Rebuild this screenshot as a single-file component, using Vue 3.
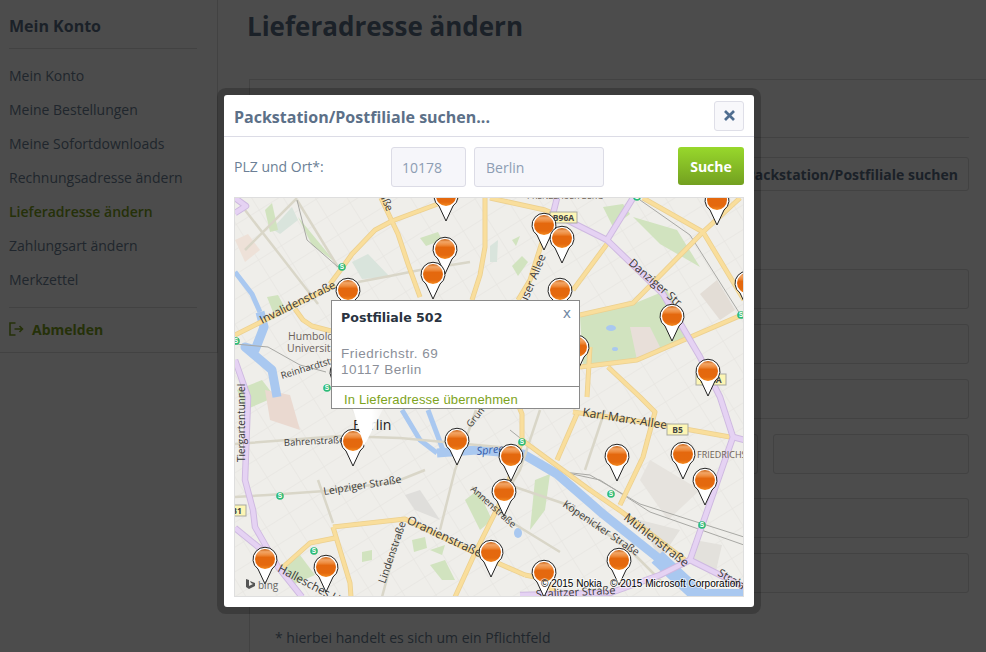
<script setup>
const navItems = [
  { label: 'Mein Konto' },
  { label: 'Meine Bestellungen' },
  { label: 'Meine Sofortdownloads' },
  { label: 'Rechnungsadresse ändern' },
  { label: 'Lieferadresse ändern', active: true },
  { label: 'Zahlungsart ändern' },
  { label: 'Merkzettel' }
]

const yellowRoads = [
  '235,335 265,320 335,285',
  '295,309 303,320 312,326 331,331',
  '330,284 342,268 352,254 375,230 392,221 435,205 458,197',
  '381,198 398,234 408,264 420,297',
  '485,198 485,247 480,275 472,300',
  '490,198 545,210 575,222',
  '550,217 530,280 518,300',
  '607,244 573,290',
  '580,315 633,303 703,232 740,198',
  '643,198 703,232 744,300',
  '580,367 637,360 744,314',
  '590,347 587,397',
  '608,367 640,397 655,412 643,457 620,505',
  '573,412 657,424 730,437',
  '515,397 522,414 522,440 590,490 622,512 685,560',
  '577,414 557,460',
  '333,527 405,519 475,553 525,575',
  '455,597 475,553 505,493 522,440',
  '333,527 350,583 351,597',
  '335,538 310,543 283,567',
  '560,597 540,578 525,575'
]

const purpleRoads = [
  '557,198 553,214 567,220 607,240 663,294 700,357 720,397 733,437 690,560',
  '633,198 607,240',
  '520,595 610,593 660,575 690,560 744,587',
  '733,437 744,440',
  '235,360 248,397 245,480 253,510 255,527 278,567 302,597',
  '235,528 262,550',
  '235,213 246,206 235,198'
]

const beigeRoads = [
  '245,210 318,304',
  '297,198 245,250',
  '297,200 338,267',
  '358,282 390,276 420,270 470,262',
  '235,444 340,436 400,438 510,448',
  '235,497 268,495 325,491 395,482 425,470',
  '318,480 333,523',
  '472,487 508,520 560,552',
  '400,530 382,597',
  '515,487 565,504 630,550 662,582',
  '476,410 455,470 440,530',
  '605,410 585,470',
  '540,410 520,470 502,500'
]

const rails = [
  '297,200 307,240 338,267',
  '640,200 690,235 740,314',
  '510,430 563,472 590,475 640,504 744,537',
  '563,472 600,480 650,512 744,545',
  '235,344 268,347 300,365 326,372'
]

const parks = [
  { points: '580,317 633,304 667,290 690,337 637,360 583,364', fill: '#d1e3bf' },
  { points: '630,327 650,327 660,347 637,360', fill: '#e8dfd9' },
  { points: '700,294 717,280 735,310 720,320', fill: '#e3ddd6' },
  { points: '603,207 623,204 630,214 613,227', fill: '#d1e3bf' },
  { points: '633,217 677,230 700,267 660,244', fill: '#d1e3bf' },
  { points: '298,217 335,262 312,245', fill: '#d1e3bf' },
  { points: '272,229 292,207 298,220 280,234', fill: '#d9e4dc' },
  { points: '352,262 368,254 390,277 362,279', fill: '#d9e4dc' },
  { points: '235,240 248,234 260,250 245,262', fill: '#eee1d8' },
  { points: '267,297 278,295 285,308 273,312', fill: '#d1e3bf' },
  { points: '420,238 438,232 442,240 426,246', fill: '#d1e3bf' },
  { points: '512,266 522,256 528,262 518,276', fill: '#d1e3bf' },
  { points: '512,240 520,236 516,246', fill: '#d1e3bf' },
  { points: '490,246 498,240 497,262 490,262', fill: '#d9e4dc' },
  { points: '535,480 550,474 545,510 530,530', fill: '#d1e3bf' },
  { points: '465,500 478,490 492,520 480,530', fill: '#d1e3bf' },
  { points: '430,550 445,545 442,555', fill: '#d1e3bf' },
  { points: '362,552 372,550 372,560 362,562', fill: '#d1e3bf' },
  { points: '430,565 445,560 455,580 442,580', fill: '#d1e3bf' },
  { points: '283,565 300,555 315,575 292,585', fill: '#d1e3bf' },
  { points: '640,520 680,530 660,560', fill: '#e3e1dc' },
  { points: '695,540 722,545 715,575 692,565', fill: '#e3e1dc' },
  { points: '650,460 700,490 668,520 640,480', fill: '#e6e3de' },
  { points: '237,390 262,380 275,397 245,410', fill: '#d1e3bf' },
  { points: '265,390 290,395 300,430 270,420', fill: '#ead9d0' },
  { points: '405,495 420,490 440,520 415,510', fill: '#dfdedb' },
  { points: '412,540 425,537 427,548 414,552', fill: '#d1e3bf' },
  { points: '265,210 272,203 278,230 270,232', fill: '#d1e3bf' }
]

const lakes = [
  { cx: 611, cy: 328, rx: 5, ry: 3 },
  { cx: 615, cy: 349, rx: 3, ry: 2 },
  { cx: 518, cy: 533, rx: 4, ry: 5 }
]

const labels = [
  { text: 'Invalidenstraße', x: 262, y: 324, r: -26, size: 11.5 },
  { text: 'Humboldt-', x: 288, y: 340, r: 0, size: 10.5, fill: '#6b625c' },
  { text: 'Universität', x: 287, y: 352, r: 0, size: 10.5, fill: '#6b625c' },
  { text: 'Reinhardtstraße', x: 282, y: 379, r: -17, size: 9.5 },
  { text: 'Danziger Str', x: 628, y: 264, r: 41, size: 11.5 },
  { text: 'Schönhauser Allee', x: 546, y: 256, r: -68, size: 11.5, end: true },
  { text: 'Tiergartentunnel', x: 245, y: 462, r: -90, size: 10 },
  { text: 'Bahrenstraße', x: 284, y: 446, r: -3, size: 9.5 },
  { text: 'Leipziger Straße', x: 324, y: 495, r: -9, size: 10.5 },
  { text: 'Oranienstraße', x: 406, y: 523, r: 25, size: 12 },
  { text: 'Lindenstraße', x: 385, y: 584, r: -71, size: 10.5 },
  { text: 'Annenstraße', x: 470, y: 490, r: 42, size: 9.5 },
  { text: 'Köpenicker Straße', x: 562, y: 506, r: 34, size: 10.5 },
  { text: 'Mühlenstraße', x: 623, y: 519, r: 38, size: 12 },
  { text: 'Karl-Marx-Allee', x: 582, y: 416, r: 9, size: 12 },
  { text: 'Skalitzer Straße', x: 536, y: 598, r: -3, size: 11 },
  { text: 'Hallesches Ufer', x: 277, y: 571, r: 28, size: 11.5 },
  { text: 'Stralauer', x: 717, y: 575, r: 30, size: 11 },
  { text: 'Brunnenstraße', x: 387, y: 212, r: 66, size: 10.5, end: true },
  { text: 'Grunerstraße', x: 471, y: 428, r: -52, size: 9.5 },
  { text: 'Berlin', x: 353, y: 430, r: 0, size: 14, fill: '#1c1c1c' },
  { text: 'FRIEDRICHSHAIN', x: 697, y: 458, r: 0, size: 9, fill: '#6f6256' },
  { text: 'PRENZLAUER BERG', x: 527, y: 199, r: 0, size: 8.5, fill: '#6f6256' }
]

const signs = [
  { text: 'B96A', x: 550, y: 212, w: 27 },
  { text: 'B5', x: 667, y: 424, w: 21 },
  { text: 'B96A', x: 696, y: 374, w: 30 },
  { text: 'B1', x: 227, y: 505, w: 19 }
]

const sbahn = [
  [342, 267], [236, 341], [327, 388], [522, 442], [611, 494],
  [702, 525], [741, 315], [280, 496], [314, 551], [637, 197]
]

const pins = [
  [446, 196], [342, 372], [577, 347], [445, 249], [433, 274], [348, 290],
  [544, 225], [562, 238], [560, 290], [672, 316], [708, 371], [717, 200],
  [747, 283], [353, 441], [457, 440], [511, 456], [504, 491], [617, 456],
  [683, 454], [705, 480], [619, 560], [544, 572], [491, 552], [265, 559],
  [326, 567]
]
</script>

<template>
  <div class="page">
    <aside class="sidebar">
      <h2 class="side-title">Mein Konto</h2>
      <ul class="side-nav">
        <li v-for="item in navItems" :key="item.label" :class="{ active: item.active }">{{ item.label }}</li>
      </ul>
      <a class="logout">
        <svg width="15" height="14" viewBox="0 0 15 14" fill="none" stroke="#7da321" stroke-width="1.6">
          <path d="M6.5 1H1v12h5.5" />
          <path d="M5.5 7h8M10.5 4l3 3-3 3" />
        </svg>
        Abmelden
      </a>
    </aside>

    <main class="content">
      <h1 class="page-title">Lieferadresse ändern</h1>
      <section class="panel">
        <div class="panel-head"></div>
        <div class="panel-actions">
          <button class="ghost-btn">Packstation/Postfiliale suchen</button>
        </div>
        <div class="fields">
          <div class="field"></div>
          <div class="field"></div>
          <div class="field"></div>
          <div class="field-pair">
            <div class="field grow"></div>
            <div class="field small"></div>
          </div>
          <div class="field spaced"></div>
          <div class="field"></div>
        </div>
        <p class="note">* hierbei handelt es sich um ein Pflichtfeld</p>
      </section>
    </main>

    <div class="overlay">
      <div class="modal">
        <header class="modal-head">
          <h3 class="modal-title">Packstation/Postfiliale suchen...</h3>
          <button class="close-btn">
            <svg width="11" height="11" viewBox="0 0 11 11" stroke="#4f6d8f" stroke-width="2.7">
              <path d="M1 1l9 9M10 1l-9 9" />
            </svg>
          </button>
        </header>
        <div class="search-row">
          <span class="search-label">PLZ und Ort*:</span>
          <div class="search-input zip">10178</div>
          <div class="search-input city">Berlin</div>
          <button class="search-btn">Suche</button>
        </div>
        <div class="map">
          <svg class="map-svg" width="508" height="398" viewBox="235 198 508 398">
            <defs>
              <pattern id="streets" width="27" height="21" patternUnits="userSpaceOnUse" patternTransform="rotate(-32)">
                <path d="M0 0H27M0 0V21" fill="none" stroke="#e3e2dd" stroke-width="1" />
              </pattern>
              <linearGradient id="ball" x1="0" y1="0" x2="0" y2="1">
                <stop offset="0" stop-color="#c9600f" />
                <stop offset="0.14" stop-color="#f2a566" />
                <stop offset="0.3" stop-color="#ee8c3e" />
                <stop offset="0.42" stop-color="#e4680e" />
                <stop offset="0.8" stop-color="#e4690e" />
                <stop offset="1" stop-color="#f48a20" />
              </linearGradient>
              <g id="pin">
                <path d="M0 25L-7 10A12 12 0 1 1 7 10Z" fill="#fff" stroke="#222" stroke-width="1" />
                <circle r="10" fill="url(#ball)" />
              </g>
            </defs>

            <rect x="235" y="198" width="508" height="398" fill="#efeeea" />
            <rect x="235" y="198" width="508" height="398" fill="url(#streets)" />
            <polygon v-for="p in parks" :key="p.points" :points="p.points" :fill="p.fill" />

            <polyline points="235,272 252,294 260,312" class="river thin" />
            <polyline points="260,312 264,327 255,350 245,347 272,370 277,397" class="river" />
            <polyline points="402,410 420,440 437,453" class="river thin" />
            <polyline points="437,453 477,450 523,454 557,474 603,514 657,557 693,590" class="river" />
            <polyline points="428,410 443,450" class="river thin" />
            <polyline points="657,557 700,597 744,597" class="river wide" />
            <ellipse v-for="l in lakes" :key="l.cx" :cx="l.cx" :cy="l.cy" :rx="l.rx" :ry="l.ry" fill="#a9c8f0" />

            <polyline v-for="r in beigeRoads" :key="r" :points="r" class="beige" />
            <polyline v-for="r in rails" :key="r" :points="r" class="rail" />
            <polyline v-for="r in yellowRoads" :key="r" :points="r" class="road-case" />
            <polyline v-for="r in yellowRoads" :key="r + 'f'" :points="r" class="road" />
            <polyline v-for="r in purpleRoads" :key="r" :points="r" class="motor-case" />
            <polyline v-for="r in purpleRoads" :key="r + 'f'" :points="r" class="motor" />

            <text
              v-for="l in labels"
              :key="l.text"
              class="street"
              :font-size="l.size"
              :fill="l.fill || '#3b3a38'"
              :text-anchor="l.end ? 'end' : 'start'"
              :transform="`translate(${l.x} ${l.y}) rotate(${l.r})`"
            >{{ l.text }}</text>
            <text x="477" y="455" class="spree" transform="rotate(-6 477 455)">Spree</text>

            <g v-for="s in signs" :key="s.x">
              <rect :x="s.x" :y="s.y" :width="s.w" height="11" fill="#fdf6b4" stroke="#a9a9a0" />
              <text :x="s.x + s.w / 2" :y="s.y + 9" class="sign-text">{{ s.text }}</text>
            </g>

            <g v-for="s in sbahn" :key="s[0]">
              <circle :cx="s[0]" :cy="s[1]" r="3.8" fill="#2dbb78" />
              <text :x="s[0]" :y="s[1] + 2.3" class="sbahn-text">S</text>
            </g>

            <use v-for="p in pins" :key="p[0]" href="#pin" :x="p[0]" :y="p[1]" />

            <path d="M246 579l3 1v6l4-2-2-1-1-2 5 2v3l-6 3-3-2z" fill="#555" />
            <text x="258" y="589" class="bing">bing</text>
            <text x="541" y="587" class="copy">© 2015 Nokia</text>
            <text x="610" y="587" class="copy">© 2015 Microsoft Corporation</text>
          </svg>

          <div class="popup">
            <b class="popup-title">Postfiliale 502</b>
            <span class="popup-close">x</span>
            <div class="popup-addr">Friedrichstr. 69<br />10117 Berlin</div>
            <a class="popup-link">In Lieferadresse übernehmen</a>
            <div class="popup-tail"></div>
          </div>
        </div>
      </div>
    </div>
  </div>
</template>

<style>
body {
  margin: 0;
}
</style>

<style scoped>
.page {
  position: relative;
  display: flex;
  align-items: flex-start;
  width: 986px;
  height: 652px;
  overflow: hidden;
  background: #fff;
  font-family: "Open Sans", sans-serif;
  font-size: 14px;
  color: #6c7f96;
}

.sidebar {
  box-sizing: border-box;
  width: 218px;
  height: 353px;
  padding: 0 20px 0 9px;
  border-right: 1px solid #dcdcdc;
  border-bottom: 1px solid #dcdcdc;
}

.side-title {
  margin: 0;
  height: 48px;
  line-height: 53px;
  font-size: 16px;
  font-weight: 700;
  color: #5c7088;
  border-bottom: 1px solid #dcdcdc;
}

.side-nav {
  list-style: none;
  margin: 0;
  padding: 10px 0 10px;
  border-bottom: 1px solid #dcdcdc;
}

.side-nav li {
  height: 34px;
  line-height: 34px;
  white-space: nowrap;
}

.side-nav li.active {
  color: #7da321;
  font-weight: 600;
}

.logout {
  display: flex;
  align-items: center;
  gap: 8px;
  height: 42px;
  font-weight: 700;
  color: #7da321;
}

.content {
  flex: 1;
  padding-left: 31px;
  min-width: 0;
}

.page-title {
  margin: 0 0 0 -2px;
  height: 79px;
  line-height: 52px;
  font-size: 26px;
  font-weight: 700;
  color: #5c7088;
}

.panel {
  height: 600px;
  border-top: 1px solid #dcdcdc;
  border-left: 1px solid #dcdcdc;
}

.panel-head {
  height: 57px;
  margin-right: 17px;
  border-bottom: 1px solid #dcdcdc;
}

.panel-actions {
  display: flex;
  justify-content: flex-end;
  margin: 19px 17px 0 0;
}

.ghost-btn {
  height: 34px;
  padding: 0 10px;
  border: 1px solid #dcdcdc;
  border-radius: 3px;
  background: #fff;
  font-family: inherit;
  font-size: 14px;
  font-weight: 700;
  color: #5c7088;
}

.fields {
  display: flex;
  flex-direction: column;
  gap: 15px;
  margin: 78px 17px 0 200px;
}

.field {
  box-sizing: border-box;
  height: 40px;
  border: 1px solid #dcdcdc;
  border-radius: 3px;
  background: #fafafc;
}

.field-pair {
  display: flex;
  gap: 15px;
}

.field.grow {
  flex: 1;
}

.field.small {
  width: 196px;
}

.field.spaced {
  margin-top: 9px;
}

.note {
  margin: 35px 0 0 25px;
  line-height: 20px;
  white-space: nowrap;
}

.overlay {
  position: absolute;
  inset: 0;
  padding: 95px 0 0 224px;
  background: rgba(0, 0, 0, 0.7);
}

.modal {
  box-sizing: border-box;
  width: 530px;
  height: 512px;
  border-radius: 3px;
  background: #fff;
  box-shadow: 0 0 0 7px rgba(0, 0, 0, 0.2);
}

.modal-head {
  box-sizing: border-box;
  display: flex;
  align-items: center;
  justify-content: space-between;
  height: 42px;
  padding: 0 10px;
  border-bottom: 1px solid #dcdce6;
}

.modal-title {
  margin: 2px 0 0;
  font-size: 16px;
  font-weight: 700;
  color: #5c7088;
}

.close-btn {
  display: flex;
  align-items: center;
  justify-content: center;
  box-sizing: border-box;
  width: 30px;
  height: 30px;
  padding: 0;
  border: 1px solid #dfdfe8;
  border-radius: 3px;
  background: #f8f8fb;
}

.search-row {
  display: flex;
  align-items: flex-start;
  height: 50px;
  padding: 10px 10px 0;
}

.search-label {
  width: 157px;
  line-height: 40px;
}

.search-input {
  box-sizing: border-box;
  height: 40px;
  padding-left: 11px;
  line-height: 40px;
  border: 1px solid #dcdce6;
  border-radius: 3px;
  background: #f6f6fa;
  color: #8d9db3;
}

.zip {
  width: 75px;
  margin-right: 8px;
  padding-left: 10px;
}

.city {
  width: 130px;
}

.search-btn {
  width: 66px;
  height: 38px;
  margin-left: auto;
  padding: 0;
  border: 0;
  border-radius: 3px;
  background: linear-gradient(#98d82c, #73a020);
  font-family: inherit;
  font-size: 14px;
  font-weight: 700;
  color: #fff;
}

.map {
  position: relative;
  width: 508px;
  height: 398px;
  margin-left: 10px;
  border: 1px solid #dedede;
}

.map-svg {
  display: block;
}

.river {
  fill: none;
  stroke: #a9c8f0;
  stroke-width: 9;
  stroke-linejoin: round;
}

.river.thin {
  stroke-width: 5;
}

.river.wide {
  stroke-width: 16;
}

.beige {
  fill: none;
  stroke: #d9d6c8;
  stroke-width: 2.5;
}

.rail {
  fill: none;
  stroke: #a8a8a4;
  stroke-width: 1;
}

.road-case {
  fill: none;
  stroke: #ecd08f;
  stroke-width: 5;
  stroke-linejoin: round;
}

.road {
  fill: none;
  stroke: #f9de9c;
  stroke-width: 3.4;
  stroke-linejoin: round;
}

.motor-case {
  fill: none;
  stroke: #ceb9e0;
  stroke-width: 6.5;
  stroke-linejoin: round;
}

.motor {
  fill: none;
  stroke: #e5d2f3;
  stroke-width: 4.6;
  stroke-linejoin: round;
}

.street {
  font-family: "Open Sans", sans-serif;
}

.spree {
  font-family: "Open Sans", sans-serif;
  font-size: 11px;
  font-style: italic;
  fill: #3a5ea8;
}

.sign-text {
  font-family: "Open Sans", sans-serif;
  font-size: 8.5px;
  font-weight: 700;
  text-anchor: middle;
  fill: #444;
}

.sbahn-text {
  font-family: "Liberation Sans", sans-serif;
  font-size: 6.5px;
  font-weight: 700;
  text-anchor: middle;
  fill: #fff;
}

.bing {
  font-family: "Open Sans", sans-serif;
  font-size: 10px;
  fill: #666;
}

.copy {
  font-family: "Liberation Sans", sans-serif;
  font-size: 10px;
  fill: #000;
  paint-order: stroke;
  stroke: rgba(255, 255, 255, 0.6);
  stroke-width: 2px;
}

.popup {
  position: absolute;
  left: 96px;
  top: 102px;
  box-sizing: border-box;
  width: 249px;
  height: 109px;
  border: 1px solid #8a8a8a;
  background: #fff;
  font-family: "DejaVu Sans", sans-serif;
}

.popup-title {
  position: absolute;
  left: 9px;
  top: 9px;
  font-size: 12.6px;
  color: #2a3340;
}

.popup-close {
  position: absolute;
  right: 8px;
  top: 4px;
  font-size: 14px;
  color: #7289a3;
}

.popup-addr {
  position: absolute;
  left: 9px;
  top: 45px;
  font-family: "Liberation Sans", sans-serif;
  font-size: 13.5px;
  letter-spacing: 0.5px;
  line-height: 16px;
  color: #8b8f99;
}

.popup-link {
  position: absolute;
  left: 0;
  right: 0;
  bottom: 0;
  height: 21px;
  padding-left: 12px;
  border-top: 1px solid #8a8a8a;
  font-family: "Liberation Sans", sans-serif;
  font-size: 13px;
  letter-spacing: 0.15px;
  line-height: 25px;
  color: #7da321;
}

.popup-tail {
  position: absolute;
  left: 21px;
  top: 108px;
  width: 30px;
  height: 37px;
  background: linear-gradient(90deg, #fff 62%, rgba(255, 255, 255, 0.35));
  clip-path: polygon(0 0, 100% 0, 37% 100%);
}
</style>
